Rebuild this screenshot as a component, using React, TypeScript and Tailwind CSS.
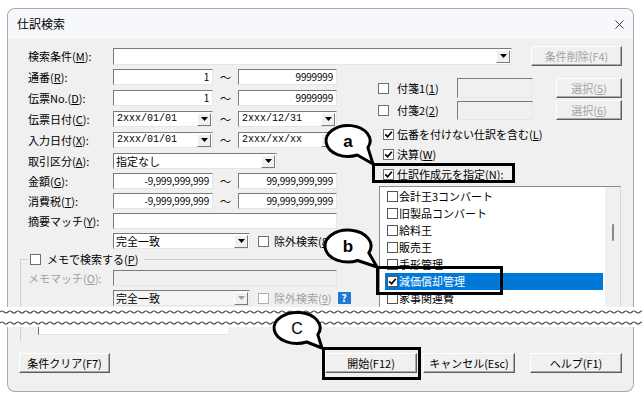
import { X } from 'lucide-react';
import clsx from 'clsx';
import type { ReactNode } from 'react';

// sunken Win32 edit look
const SUNKEN =
  'border border-t-[#7b7b7b] border-l-[#7b7b7b] border-r-[#e6e6e6] border-b-[#e6e6e6]';

function Mn({ pre, k, post = '' }: { pre: string; k: string; post?: string }) {
  return (
    <span>
      {pre}(<u className="underline-offset-1">{k}</u>){post}
    </span>
  );
}

function Check({ checked, className }: { checked?: boolean; className?: string }) {
  return (
    <span
      className={clsx(
        'w-[11px] h-[11px] shrink-0 bg-white border border-[#6f6f6f] flex items-center justify-center',
        className,
      )}
    >
      {checked && (
        <svg width="9" height="9" viewBox="0 0 9 9">
          <path d="M1.2 4.4 L3.6 6.8 L7.8 1.8" fill="none" stroke="#000" strokeWidth="1.7" />
        </svg>
      )}
    </span>
  );
}

function DropBtn({ disabled }: { disabled?: boolean }) {
  return (
    <span className="w-[14px] h-[13px] mr-px shrink-0 bg-[#f0f0f0] border border-t-white border-l-white border-r-[#7a7a7a] border-b-[#7a7a7a] flex items-center justify-center">
      <svg width="7" height="4" viewBox="0 0 7 4">
        <path d="M0 0 H7 L3.5 4 Z" fill={disabled ? '#a0a0a0' : '#000'} />
      </svg>
    </span>
  );
}

function Field({ className, children, disabled }: { className: string; children?: ReactNode; disabled?: boolean }) {
  return (
    <div
      className={clsx(
        SUNKEN,
        'h-[16px] flex items-center justify-end pr-[3px] text-[10px] tracking-[-0.2px] leading-none',
        disabled ? 'bg-[#f0f0f0]' : 'bg-white',
        className,
      )}
    >
      {children}
    </div>
  );
}

function DateBox({ className, value }: { className: string; value: string }) {
  return (
    <div className={clsx(SUNKEN, 'h-[16px] bg-white flex items-center', className)}>
      <span className="flex-1 pl-[3px] font-['Liberation_Mono',monospace] text-[10px] leading-none">{value}</span>
      <DropBtn />
    </div>
  );
}

function Combo({ className, value, disabled }: { className: string; value?: string; disabled?: boolean }) {
  return (
    <div className={clsx(SUNKEN, 'h-[16px] flex items-center', disabled ? 'bg-[#f4f4f4]' : 'bg-white', className)}>
      <span className="flex-1 pl-[2px] text-[11px] leading-none">{value}</span>
      <DropBtn disabled={disabled} />
    </div>
  );
}

function Btn({ className, disabled, children }: { className: string; disabled?: boolean; children: ReactNode }) {
  return (
    <div
      className={clsx(
        'h-[20px] flex items-center justify-center bg-[#f0f0f0] text-[11px] border border-t-white border-l-white border-r-[#5e5e5e] border-b-[#5e5e5e] shadow-[inset_-1px_-1px_0_#a8a8a8]',
        disabled ? 'text-[#a3a3a3]' : 'text-black',
        className,
      )}
    >
      {children}
    </div>
  );
}

function Tilde() {
  return <span className="w-[25px] text-center leading-[16px]">～</span>;
}

const sources: [string, boolean][] = [
  ['会計王3コンバート', false],
  ['旧製品コンバート', false],
  ['給料王', false],
  ['販売王', false],
  ['手形管理', false],
  ['減価償却管理', true],
  ['家事関連費', false],
];

function wave(y: number) {
  let d = `M0 ${y}`;
  for (let x = 0; x < 650; x += 8) d += ` Q${x + 2} ${y - 2} ${x + 4} ${y} T${x + 8} ${y}`;
  return d;
}

export default function App() {
  return (
    <div className="relative w-[642px] h-[403px] bg-white overflow-hidden font-['Noto_Sans_CJK_JP',sans-serif] text-[11px] text-black">
      {/* Upper half of the dialog */}
      <div className="ml-[7px] mt-[8px] w-[627px] h-[299px] border border-b-0 border-[#a4a9b0] rounded-t-[8px] bg-[#f0f0f0] overflow-hidden">
        <div className="h-[30px] bg-[#f6f8fb] flex items-center justify-between pl-[9px] pr-[6px]">
          <span className="text-[12px]">仕訳検索</span>
          <X className="w-[15px] h-[15px]" strokeWidth={1.2} />
        </div>

        <div className="pt-[7px]">
          <div className="flex items-center h-[20px] pl-[20px]">
            <span className="w-[85px] leading-[16px]"><Mn pre="検索条件" k="M" post=":" /></span>
            <Combo className="w-[399px] h-[17px]" />
            <Btn className="ml-[19px] w-[91px]" disabled>条件削除(F4)</Btn>
          </div>

          <div className="flex mt-[3px]">
            {/* Left column */}
            <div className="w-[362px]">
              <div className="flex items-start h-[21px] pl-[20px]">
                <span className="w-[85px] leading-[16px]"><Mn pre="通番" k="R" post=":" /></span>
                <Field className="w-[100px]">1</Field>
                <Tilde />
                <Field className="w-[99px]">9999999</Field>
              </div>
              <div className="flex items-start h-[21px] pl-[20px]">
                <span className="w-[85px] leading-[16px]"><Mn pre="伝票No." k="D" post=":" /></span>
                <Field className="w-[100px]">1</Field>
                <Tilde />
                <Field className="w-[99px]">9999999</Field>
              </div>
              <div className="flex items-start h-[21px] pl-[20px]">
                <span className="w-[85px] leading-[16px]"><Mn pre="伝票日付" k="C" post=":" /></span>
                <DateBox className="w-[100px]" value="2xxx/01/01" />
                <Tilde />
                <DateBox className="w-[99px]" value="2xxx/12/31" />
              </div>
              <div className="flex items-start h-[21px] pl-[20px]">
                <span className="w-[85px] leading-[16px]"><Mn pre="入力日付" k="X" post=":" /></span>
                <DateBox className="w-[100px]" value="2xxx/01/01" />
                <Tilde />
                <DateBox className="w-[99px]" value="2xxx/xx/xx" />
              </div>
              <div className="flex items-start h-[20px] pl-[20px]">
                <span className="w-[85px] leading-[16px]"><Mn pre="取引区分" k="A" post=":" /></span>
                <Combo className="w-[164px]" value="指定なし" />
              </div>
              <div className="flex items-start h-[20px] pl-[20px]">
                <span className="w-[85px] leading-[16px]"><Mn pre="金額" k="G" post=":" /></span>
                <Field className="w-[100px]">-9,999,999,999</Field>
                <Tilde />
                <Field className="w-[99px]">99,999,999,999</Field>
              </div>
              <div className="flex items-start h-[20px] pl-[20px]">
                <span className="w-[85px] leading-[16px]"><Mn pre="消費税" k="T" post=":" /></span>
                <Field className="w-[100px]">-9,999,999,999</Field>
                <Tilde />
                <Field className="w-[99px]">99,999,999,999</Field>
              </div>
              <div className="flex items-start h-[20px] pl-[20px]">
                <span className="w-[85px] leading-[16px]"><Mn pre="摘要マッチ" k="Y" post=":" /></span>
                <Field className="w-[224px]" />
              </div>
              <div className="flex items-center h-[16px] pl-[105px]">
                <Combo className="w-[137px]" value="完全一致" />
                <Check className="ml-[8px]" />
                <span className="ml-[5px]"><Mn pre="除外検索" k="8" /></span>
              </div>

              {/* メモ group box */}
              <div className="mt-[2px] ml-[12px] w-[350px]">
                <div className="flex items-center h-[16px]">
                  <span className="w-[8px] h-[8px] self-end border-t border-l border-[#cfcfcf]" />
                  <Check className="ml-[2px]" />
                  <span className="ml-[6px] mr-[6px]"><Mn pre="メモで検索する" k="P" /></span>
                  <span className="flex-1 h-[8px] self-end border-t border-[#cfcfcf]" />
                </div>
                <div className="border-l border-[#cfcfcf] pl-[7px] pt-[3px] h-[60px]">
                  <div className="flex items-start h-[20px]">
                    <span className="w-[85px] leading-[16px] text-[#a0a0a0]"><Mn pre="メモマッチ" k="O" post=":" /></span>
                    <Field className="w-[224px]" disabled />
                  </div>
                  <div className="flex items-center h-[16px]">
                    <span className="w-[85px]" />
                    <Combo className="w-[137px]" value="完全一致" disabled />
                    <Check className="ml-[8px] border-[#b0b0b0]" />
                    <span className="ml-[5px] text-[#a0a0a0]"><Mn pre="除外検索" k="9" /></span>
                    <span className="ml-[6px] w-[13px] h-[12px] bg-[#1f78d1] text-white text-[10px] font-bold leading-none flex items-center justify-center">?</span>
                  </div>
                </div>
              </div>
            </div>

            {/* Right column */}
            <div className="ml-[8px] w-[244px] pt-[9px]">
              <div className="flex items-center h-[20px]">
                <Check />
                <span className="ml-[8px] w-[60px]"><Mn pre="付箋1" k="1" /></span>
                <div className={clsx(SUNKEN, 'w-[76px] h-[20px] bg-[#f0f0f0]')} />
                <Btn className="ml-[23px] w-[66px]" disabled><Mn pre="選択" k="5" /></Btn>
              </div>
              <div className="flex items-center h-[20px] mt-[2px]">
                <Check />
                <span className="ml-[8px] w-[60px]"><Mn pre="付箋2" k="2" /></span>
                <div className={clsx(SUNKEN, 'w-[76px] h-[19px] bg-[#f0f0f0]')} />
                <Btn className="ml-[23px] w-[66px] h-[17px]" disabled><Mn pre="選択" k="6" /></Btn>
              </div>
              <div className="flex items-center h-[20px] mt-[4px] pl-[5px]">
                <Check checked />
                <span className="ml-[3px]"><Mn pre="伝番を付けない仕訳を含む" k="L" /></span>
              </div>
              <div className="flex items-center h-[20px] pl-[5px]">
                <Check checked />
                <span className="ml-[3px]"><Mn pre="決算" k="W" /></span>
              </div>
              <div className="flex items-center h-[20px] pl-[5px]">
                <Check checked />
                <span className="ml-[3px]"><Mn pre="仕訳作成元を指定" k="N" post=":" /></span>
              </div>

              {/* 仕訳作成元 list */}
              <div className="mt-[2px] ml-[1px] w-[242px] h-[140px] flex border-t border-l border-[#8c8c8c] border-r border-r-[#d8d8d8]">
                <div className="w-[225px] bg-white pt-px pl-[5px]">
                  {sources.map(([name, on]) => (
                    <div
                      key={name}
                      className={clsx(
                        'h-[17px] w-[218px] flex items-center text-[11px]',
                        on ? 'bg-[#0078d7] text-white' : 'text-black',
                      )}
                    >
                      <Check checked={on} className="ml-[2px] border-[#555]" />
                      <span className="ml-px leading-none">{name}</span>
                    </div>
                  ))}
                </div>
                <div className="w-[15px] bg-[#f0f0f0] pt-[37px] flex justify-center">
                  <span className="w-[2px] h-[17px] bg-[#8a8a8a] rounded-full" />
                </div>
              </div>
            </div>
          </div>
        </div>
      </div>

      {/* Cut marks */}
      <div className="h-[20px] bg-white">
        <svg width="642" height="20" className="block">
          <path d={wave(5)} fill="none" stroke="#4d4d4d" strokeWidth="1.1" />
          <path d={wave(16)} fill="none" stroke="#4d4d4d" strokeWidth="1.1" />
        </svg>
      </div>

      {/* Lower half of the dialog */}
      <div className="ml-[7px] w-[627px] h-[65px] border border-t-0 border-[#a4a9b0] rounded-b-[8px] bg-[#f0f0f0]">
        <div className="flex h-[14px]">
          <span className="ml-[12px] h-[14px] border-l border-[#cfcfcf]" />
          <span className="ml-[17px] w-[190px] h-[8px] bg-white border-l border-b border-l-[#6d6d6d] border-b-[#e4e4e4]" />
        </div>
        <div className="flex mt-[12px]">
          <Btn className="ml-[11px] w-[91px]">条件クリア(F7)</Btn>
          <Btn className="ml-[215px] w-[92px]">開始(F12)</Btn>
          <Btn className="ml-[6px] w-[92px]">キャンセル(Esc)</Btn>
          <Btn className="ml-[15px] w-[92px]">ヘルプ(F1)</Btn>
        </div>
      </div>

      {/* Callouts */}
      <svg className="absolute left-0 top-0 pointer-events-none" width="642" height="403">
        <g fill="none" stroke="#000" strokeWidth="3">
          <rect x="373.5" y="164.5" width="140" height="17" />
          <rect x="377.5" y="267.5" width="124" height="26" />
          <rect x="323.5" y="348.5" width="96" height="30" />
        </g>
        <g fill="#fff" stroke="#000" strokeWidth="3" strokeLinejoin="round">
          <path d="M367.9 147.6 A22 15.5 0 1 0 357.3 155 L373 164 Z" />
          <path d="M368.8 252.8 A23 16 0 1 0 357.7 260.5 L377 267 Z" />
          <path d="M317.8 334.6 A23 15.5 0 1 0 306.7 342 L322 348 Z" />
        </g>
        <g fontFamily="'Liberation Sans', sans-serif" textAnchor="middle" fill="#000">
          <text x="348" y="147" fontSize="17" fontWeight="bold">a</text>
          <text x="348" y="252" fontSize="17" fontWeight="bold">b</text>
          <text x="297" y="334" fontSize="16">C</text>
        </g>
      </svg>
    </div>
  );
}
